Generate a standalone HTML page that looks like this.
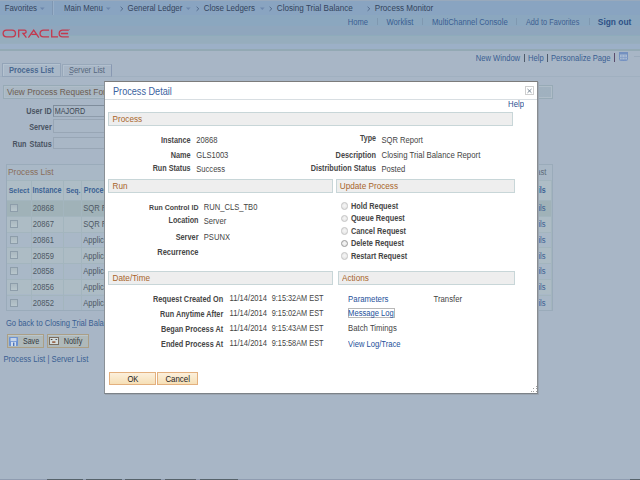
<!DOCTYPE html>
<html><head><meta charset="utf-8">
<style>
*{margin:0;padding:0;box-sizing:border-box}
html,body{width:640px;height:480px;overflow:hidden}
body{position:relative;background:#a8b6c6;font-family:"Liberation Sans",sans-serif;font-size:7.6px;color:#333}
.a{position:absolute}
.t{position:absolute;white-space:nowrap;line-height:10px}
</style></head><body>
<div class="a" style="left:0px;top:0px;width:640px;height:15px;background:#89a4c1"></div>
<div class="a" style="left:0px;top:0px;width:640px;height:1px;background:#98a9bc"></div>
<div class="t" style="left:4.7px;top:4px;font-size:7.85px;color:#34445e;transform:scaleY(1.16);transform-origin:0 4.5px;">Favorites</div>
<div class="t" style="left:64px;top:4px;font-size:7.85px;color:#34445e;transform:scaleY(1.16);transform-origin:0 4.5px;">Main Menu</div>
<div class="t" style="left:127.5px;top:4px;font-size:7.9px;color:#34445e;transform:scaleY(1.16);transform-origin:0 4.5px;">General Ledger</div>
<div class="t" style="left:203.7px;top:4px;font-size:7.95px;color:#34445e;transform:scaleY(1.16);transform-origin:0 4.5px;">Close Ledgers</div>
<div class="t" style="left:276.8px;top:4px;font-size:8.1px;color:#34445e;transform:scaleY(1.16);transform-origin:0 4.5px;">Closing Trial Balance</div>
<div class="t" style="left:374.75px;top:4px;font-size:8.1px;color:#34445e;transform:scaleY(1.16);transform-origin:0 4.5px;">Process Monitor</div>
<svg class="a" style="left:39.8px;top:6.5px" width="5" height="4"><path d="M0 0.4 H4.6 L2.3 3 Z" fill="#6c86ac"/></svg>
<svg class="a" style="left:105.6px;top:6.5px" width="5" height="4"><path d="M0 0.4 H4.6 L2.3 3 Z" fill="#6c86ac"/></svg>
<svg class="a" style="left:186.3px;top:6.5px" width="5" height="4"><path d="M0 0.4 H4.6 L2.3 3 Z" fill="#6c86ac"/></svg>
<svg class="a" style="left:259.8px;top:6.5px" width="5" height="4"><path d="M0 0.4 H4.6 L2.3 3 Z" fill="#6c86ac"/></svg>
<svg class="a" style="left:119.5px;top:6px" width="4" height="6"><path d="M0.6 0.8 L2.8 2.8 L0.6 4.8" fill="none" stroke="#4e6484" stroke-width="0.9"/></svg>
<svg class="a" style="left:196px;top:6px" width="4" height="6"><path d="M0.6 0.8 L2.8 2.8 L0.6 4.8" fill="none" stroke="#4e6484" stroke-width="0.9"/></svg>
<svg class="a" style="left:268.9px;top:6px" width="4" height="6"><path d="M0.6 0.8 L2.8 2.8 L0.6 4.8" fill="none" stroke="#4e6484" stroke-width="0.9"/></svg>
<svg class="a" style="left:366.9px;top:6px" width="4" height="6"><path d="M0.6 0.8 L2.8 2.8 L0.6 4.8" fill="none" stroke="#4e6484" stroke-width="0.9"/></svg>
<div class="a" style="left:52px;top:1px;width:1px;height:14px;background:#7f97b2"></div>
<div class="a" style="left:53px;top:1px;width:1px;height:14px;background:#98afc8"></div>
<div class="a" style="left:0px;top:15px;width:640px;height:11px;background:#8ba7bf"></div>
<div class="a" style="left:0px;top:26px;width:640px;height:9px;background:#8fa6bd"></div>
<div class="a" style="left:0px;top:35px;width:640px;height:1px;background:#8eabbb"></div>
<div class="a" style="left:0px;top:36px;width:640px;height:7px;background:#96adbd"></div>
<div class="a" style="left:0px;top:43px;width:640px;height:1px;background:#98aebe"></div>
<div class="a" style="left:0px;top:44px;width:640px;height:5px;background:#9cb0c7"></div>
<div class="a" style="left:0px;top:49px;width:640px;height:2px;background:#93a9b4"></div>
<div class="a" style="left:0px;top:51px;width:640px;height:429px;background:#a8b6c6"></div>
<svg class="a" style="left:0;top:26px" width="76" height="16" viewBox="0 0 76 16">
<g fill="none" stroke="#c4384e" stroke-width="1.3">
<rect x="3.15" y="4.05" width="12.3" height="6.9" rx="3.45"/>
<path d="M18.7 11.6 V4.05 H24.5 A1.625 1.625 0 0 1 24.5 7.3 H23 L26.4 11.6"/>
<path d="M28.4 11.6 L33.7 4.05 L38.9 11.6 M31.6 8.4 H36.6"/>
<path d="M49.1 4.05 H43.5 A3.45 3.45 0 0 0 43.5 10.95 H49.1"/>
<path d="M51.7 3.4 V10.95 H58"/>
<path d="M68.8 4.05 H62.6 A3.45 3.45 0 0 0 62.6 10.95 H68.8 M60.8 7.5 H68.1"/>
</g>
<circle cx="69.6" cy="3.6" r="0.45" fill="#c4384e"/>
</svg>
<div class="t" style="left:347.8px;top:18px;font-size:7.6px;color:#3a5e92;transform:scaleY(1.16);transform-origin:0 4.5px;">Home</div>
<div class="a" style="left:377px;top:18px;width:1px;height:7px;background:#7f98b0"></div>
<div class="t" style="left:386.6px;top:18px;font-size:7.6px;color:#3a5e92;transform:scaleY(1.16);transform-origin:0 4.5px;">Worklist</div>
<div class="a" style="left:422px;top:18px;width:1px;height:7px;background:#7f98b0"></div>
<div class="t" style="left:431.9px;top:18px;font-size:7.75px;color:#3a5e92;transform:scaleY(1.16);transform-origin:0 4.5px;">MultiChannel Console</div>
<div class="a" style="left:516px;top:18px;width:1px;height:7px;background:#7f98b0"></div>
<div class="t" style="left:525.9px;top:18px;font-size:7.35px;color:#3f6090;transform:scaleY(1.16);transform-origin:0 4.5px;">Add to Favorites</div>
<div class="a" style="left:589px;top:18px;width:1px;height:7px;background:#7f98b0"></div>
<div class="t" style="left:597.8px;top:17px;font-size:8.4px;color:#2f5186;font-weight:bold;transform:scaleY(1.16);transform-origin:0 5.0px;">Sign out</div>
<div class="t" style="left:475.8px;top:54px;font-size:7.6px;color:#3a5e92;transform:scaleY(1.16);transform-origin:0 4.5px;">New Window</div>
<div class="a" style="left:524px;top:54px;width:1px;height:8px;background:#4e5a6a"></div>
<div class="t" style="left:528px;top:54px;font-size:7.6px;color:#3a5e92;transform:scaleY(1.16);transform-origin:0 4.5px;">Help</div>
<div class="a" style="left:547px;top:54px;width:1px;height:8px;background:#4e5a6a"></div>
<div class="t" style="left:551px;top:54px;font-size:7.6px;color:#3a5e92;transform:scaleY(1.16);transform-origin:0 4.5px;">Personalize Page</div>
<div class="a" style="left:614px;top:53px;width:1px;height:9px;background:#5a4c6c"></div>
<svg class="a" style="left:619px;top:52px" width="9" height="9"><rect x="0.5" y="0.5" width="8" height="8" rx="1" fill="#a9bbd3" stroke="#7390c0"/><rect x="0" y="0" width="9" height="2.5" fill="#7390c0"/><path d="M3 3 V9 M0 5.5 H9 M0 7.5 H9 M6 3 V9" stroke="#7f9bc6" stroke-width="0.7"/></svg>
<div class="a" style="left:634px;top:56px;width:6px;height:1px;background:#9aaabb"></div>
<div class="a" style="left:0px;top:76px;width:640px;height:1px;background:#a0b0c0"></div>
<div class="a" style="left:2px;top:63px;width:59px;height:14px;background:#a9b8c8;border:1px solid #93a4b8;box-shadow:inset 1px 1px 0 #b4c2d0"></div>
<div class="t" style="left:9px;top:66px;font-size:7.55px;color:#4a6890;font-weight:bold;transform:scaleY(1.16);transform-origin:0 4.5px;">Process List</div>
<div class="a" style="left:62px;top:64px;width:50px;height:13px;background:#a8b6c6;border:1px solid #98a8ba;border-right-color:#8898b2;box-shadow:inset 1px 1px 0 #b2c0ce"></div>
<div class="t" style="left:68.9px;top:66px;font-size:7.55px;color:#56667c;transform:scaleY(1.16);transform-origin:0 4.5px;">Server List</div>
<div class="a" style="left:69px;top:74px;width:4px;height:1px;background:#7888a0"></div>
<div class="a" style="left:3px;top:85px;width:550px;height:14px;background:linear-gradient(90deg,#aab8c4,#a0b1bf);border:1px solid #97aab6;box-shadow:inset 0 0 0 1px #afbdc8"></div>
<div class="t" style="left:6.9px;top:87px;font-size:8.4px;color:#6e5e52;transform:scaleY(1.0);transform-origin:0 5.0px;">View Process Request For</div>
<div class="t" style="right:588.3px;top:107px;font-size:7.25px;color:#4a5462;font-weight:bold;transform:scaleY(1.16);transform-origin:0 4.5px;">User ID</div>
<div class="a" style="left:53px;top:105px;width:60px;height:12px;background:#a9b7c6;border:1px solid #8e9cab;border-top-color:#7f8d9c;border-left-color:#7f8d9c"></div>
<div class="t" style="left:54.8px;top:107px;font-size:7.2px;color:#3e4854;transform:scaleY(1.16);transform-origin:0 4.5px;">MAJORD</div>
<div class="t" style="right:588.3px;top:123px;font-size:7.25px;color:#4a5462;font-weight:bold;transform:scaleY(1.16);transform-origin:0 4.5px;">Server</div>
<div class="a" style="left:53px;top:119px;width:60px;height:14px;background:#a9b7c6;border:1px solid #98a6b5"></div>
<div class="t" style="right:588.3px;top:140px;font-size:7.25px;color:#4a5462;font-weight:bold;transform:scaleY(1.16);transform-origin:0 4.5px;word-spacing:1px">Run Status</div>
<div class="a" style="left:53px;top:137px;width:60px;height:12px;background:#a9b7c6;border:1px solid #98a6b5"></div>
<div class="a" style="left:6px;top:164px;width:547px;height:147px;background:#a9b8c6;border:1px solid #9aabba"></div>
<div class="t" style="left:8px;top:167px;font-size:8.4px;color:#8a6e5c;transform:scaleY(1.16);transform-origin:0 5.0px;">Process List</div>
<div class="t" style="right:93.70000000000005px;top:168px;font-size:7.6px;color:#5e6c7a;transform:scaleY(1.16);transform-origin:0 4.5px;">Last</div>
<div class="a" style="left:7px;top:180px;width:545px;height:20px;background:#aebdc6"></div>
<div class="a" style="left:7px;top:200px;width:545px;height:16px;background:#a0b2b8"></div>
<div class="a" style="left:7px;top:216px;width:545px;height:16px;background:#adbcc5"></div>
<div class="a" style="left:7px;top:232px;width:545px;height:15px;background:#a9b8c7"></div>
<div class="a" style="left:7px;top:247px;width:545px;height:16px;background:#adbcc5"></div>
<div class="a" style="left:7px;top:263px;width:545px;height:16px;background:#a9b8c7"></div>
<div class="a" style="left:7px;top:279px;width:545px;height:15px;background:#adbcc5"></div>
<div class="a" style="left:7px;top:294px;width:545px;height:16px;background:#a9b8c7"></div>
<div class="a" style="left:7px;top:180px;width:545px;height:1px;background:#a3b5be"></div>
<div class="a" style="left:7px;top:200px;width:545px;height:1px;background:#a3b5be"></div>
<div class="a" style="left:7px;top:216px;width:545px;height:1px;background:#a3b5be"></div>
<div class="a" style="left:7px;top:232px;width:545px;height:1px;background:#a3b5be"></div>
<div class="a" style="left:7px;top:247px;width:545px;height:1px;background:#a3b5be"></div>
<div class="a" style="left:7px;top:263px;width:545px;height:1px;background:#a3b5be"></div>
<div class="a" style="left:7px;top:279px;width:545px;height:1px;background:#a3b5be"></div>
<div class="a" style="left:7px;top:295px;width:545px;height:1px;background:#a3b5be"></div>
<div class="a" style="left:31px;top:180px;width:1px;height:130px;background:#a3b5be"></div>
<div class="a" style="left:63px;top:180px;width:1px;height:130px;background:#a3b5be"></div>
<div class="a" style="left:81px;top:180px;width:1px;height:130px;background:#a3b5be"></div>
<div class="a" style="left:551px;top:180px;width:1px;height:130px;background:#a3b5be"></div>
<div class="t" style="left:8.7px;top:186px;font-size:7.0px;color:#3c6294;font-weight:bold;transform:scaleY(1.16);transform-origin:0 4.5px;">Select</div>
<div class="t" style="left:32.5px;top:186px;font-size:7.15px;color:#3c6294;font-weight:bold;transform:scaleY(1.16);transform-origin:0 4.5px;">Instance</div>
<div class="t" style="left:65.9px;top:186px;font-size:6.9px;color:#3c6294;font-weight:bold;transform:scaleY(1.16);transform-origin:0 4.5px;">Seq.</div>
<div class="t" style="left:83.7px;top:186px;font-size:7.1px;color:#3c6294;font-weight:bold;transform:scaleY(1.16);transform-origin:0 4.5px;">Process Type</div>
<div class="t" style="right:94.39999999999998px;top:186px;font-size:7.1px;color:#3c6294;font-weight:bold;transform:scaleY(1.16);transform-origin:0 4.5px;">Details</div>
<div class="a" style="left:10px;top:204px;width:8px;height:8px;border:1px solid #8d9daa;background:linear-gradient(#aab8c0,#b8c6cc)"></div>
<div class="t" style="left:32.75px;top:204px;font-size:7.6px;color:#4e5864;transform:scaleY(1.16);transform-origin:0 4.5px;">20868</div>
<div class="t" style="left:83.2px;top:204px;font-size:7.6px;color:#4e5864;transform:scaleY(1.16);transform-origin:0 4.5px;">SQR Report</div>
<div class="t" style="right:94.39999999999998px;top:204px;font-size:7.6px;color:#3c6294;transform:scaleY(1.16);transform-origin:0 4.5px;">Details</div>
<div class="a" style="left:10px;top:220px;width:8px;height:8px;border:1px solid #8d9daa;background:linear-gradient(#aab8c0,#b8c6cc)"></div>
<div class="t" style="left:32.75px;top:220px;font-size:7.6px;color:#4e5864;transform:scaleY(1.16);transform-origin:0 4.5px;">20867</div>
<div class="t" style="left:83.2px;top:220px;font-size:7.6px;color:#4e5864;transform:scaleY(1.16);transform-origin:0 4.5px;">SQR Report</div>
<div class="t" style="right:94.39999999999998px;top:220px;font-size:7.6px;color:#3c6294;transform:scaleY(1.16);transform-origin:0 4.5px;">Details</div>
<div class="a" style="left:10px;top:236px;width:8px;height:8px;border:1px solid #8d9daa;background:linear-gradient(#aab8c0,#b8c6cc)"></div>
<div class="t" style="left:32.75px;top:236px;font-size:7.6px;color:#4e5864;transform:scaleY(1.16);transform-origin:0 4.5px;">20861</div>
<div class="t" style="left:83.2px;top:236px;font-size:7.6px;color:#4e5864;transform:scaleY(1.16);transform-origin:0 4.5px;">Application Engine</div>
<div class="t" style="right:94.39999999999998px;top:236px;font-size:7.6px;color:#3c6294;transform:scaleY(1.16);transform-origin:0 4.5px;">Details</div>
<div class="a" style="left:10px;top:251px;width:8px;height:8px;border:1px solid #8d9daa;background:linear-gradient(#aab8c0,#b8c6cc)"></div>
<div class="t" style="left:32.75px;top:252px;font-size:7.6px;color:#4e5864;transform:scaleY(1.16);transform-origin:0 4.5px;">20859</div>
<div class="t" style="left:83.2px;top:252px;font-size:7.6px;color:#4e5864;transform:scaleY(1.16);transform-origin:0 4.5px;">Application Engine</div>
<div class="t" style="right:94.39999999999998px;top:252px;font-size:7.6px;color:#3c6294;transform:scaleY(1.16);transform-origin:0 4.5px;">Details</div>
<div class="a" style="left:10px;top:267px;width:8px;height:8px;border:1px solid #8d9daa;background:linear-gradient(#aab8c0,#b8c6cc)"></div>
<div class="t" style="left:32.75px;top:267px;font-size:7.6px;color:#4e5864;transform:scaleY(1.16);transform-origin:0 4.5px;">20858</div>
<div class="t" style="left:83.2px;top:267px;font-size:7.6px;color:#4e5864;transform:scaleY(1.16);transform-origin:0 4.5px;">Application Engine</div>
<div class="t" style="right:94.39999999999998px;top:267px;font-size:7.6px;color:#3c6294;transform:scaleY(1.16);transform-origin:0 4.5px;">Details</div>
<div class="a" style="left:10px;top:283px;width:8px;height:8px;border:1px solid #8d9daa;background:linear-gradient(#aab8c0,#b8c6cc)"></div>
<div class="t" style="left:32.75px;top:283px;font-size:7.6px;color:#4e5864;transform:scaleY(1.16);transform-origin:0 4.5px;">20856</div>
<div class="t" style="left:83.2px;top:283px;font-size:7.6px;color:#4e5864;transform:scaleY(1.16);transform-origin:0 4.5px;">Application Engine</div>
<div class="t" style="right:94.39999999999998px;top:283px;font-size:7.6px;color:#3c6294;transform:scaleY(1.16);transform-origin:0 4.5px;">Details</div>
<div class="a" style="left:10px;top:299px;width:8px;height:8px;border:1px solid #8d9daa;background:linear-gradient(#aab8c0,#b8c6cc)"></div>
<div class="t" style="left:32.75px;top:299px;font-size:7.6px;color:#4e5864;transform:scaleY(1.16);transform-origin:0 4.5px;">20852</div>
<div class="t" style="left:83.2px;top:299px;font-size:7.6px;color:#4e5864;transform:scaleY(1.16);transform-origin:0 4.5px;">Application Engine</div>
<div class="t" style="right:94.39999999999998px;top:299px;font-size:7.6px;color:#3c6294;transform:scaleY(1.16);transform-origin:0 4.5px;">Details</div>
<div class="t" style="left:5.9px;top:319px;font-size:7.6px;color:#3a5e92;transform:scaleY(1.16);transform-origin:0 4.5px;">Go back to Closing Trial Balance</div>
<div class="a" style="left:72px;top:327px;width:5px;height:1px;background:#6a86aa"></div>
<div class="a" style="left:7px;top:334px;width:37px;height:14px;background:#afb9ba;border:1px solid #ab9f86;box-shadow:inset 0 1px 0 #bac6cc"></div>
<svg class="a" style="left:9px;top:337px" width="9" height="9"><rect x="0" y="0" width="9" height="9" rx="0.8" fill="#6c92d2"/><rect x="1.5" y="1" width="6" height="3.2" fill="#c6d4e8"/><rect x="2" y="5" width="5" height="4" fill="#d0dcec"/><rect x="4" y="5.5" width="1.4" height="3.5" fill="#4a72b8"/></svg>
<div class="t" style="left:22.9px;top:337px;font-size:7.15px;color:#333a44;transform:scaleY(1.16);transform-origin:0 4.5px;">Save</div>
<div class="a" style="left:47px;top:334px;width:42px;height:14px;background:#afb9ba;border:1px solid #ab9f86;box-shadow:inset 0 1px 0 #bac6cc"></div>
<svg class="a" style="left:49px;top:337px" width="10" height="8"><rect x="0.5" y="0.5" width="9" height="7" fill="#d4dcdc" stroke="#7a6c5e"/><rect x="1.8" y="2" width="1.6" height="1" fill="#4a4038"/><rect x="6.5" y="2" width="1.6" height="1" fill="#4a5868"/><rect x="3.2" y="4.2" width="3.2" height="1.8" fill="#9a6a50"/></svg>
<div class="t" style="left:63.8px;top:337px;font-size:7.25px;color:#333a44;transform:scaleY(1.16);transform-origin:0 4.5px;">Notify</div>
<div class="t" style="left:3.4px;top:355px;font-size:7.7px;color:#3a5e92;transform:scaleY(1.16);transform-origin:0 4.5px;">Process List | Server List</div>
<div class="a" style="left:104px;top:81px;width:434px;height:313px;background:#fff;border:1px solid #8a9096;border-top-color:#7c7c7c;border-right-color:#888c90;border-bottom-color:#7c8288"></div>
<div class="a" style="left:538px;top:82px;width:1px;height:312px;background:#9ca6b2"></div>
<div class="a" style="left:105px;top:394px;width:434px;height:1px;background:#9ca6b2"></div>
<div class="t" style="left:113px;top:87px;font-size:9.15px;color:#3a62a0;transform:scaleY(1.16);transform-origin:0 5.0px;">Process Detail</div>
<div class="a" style="left:525px;top:86px;width:9px;height:9px;border:1px solid #cfcfcf;background:#fff"></div>
<svg class="a" style="left:525px;top:86px" width="9" height="9"><path d="M2.5 3 L6.5 6.8 M6.5 3 L2.5 6.8" stroke="#657585" stroke-width="0.85"/></svg>
<div class="a" style="left:105px;top:99px;width:432px;height:1px;background:#d8dee2"></div>
<div class="t" style="right:116px;top:100px;font-size:7.75px;color:#2a5090;transform:scaleY(1.16);transform-origin:0 4.5px;">Help</div>
<div class="a" style="left:108px;top:112px;width:405px;height:14px;background:#eeeeee;border:1px solid #c8d6d8"></div>
<div class="t" style="left:112.6px;top:115px;font-size:8.2px;color:#a8642a;transform:scaleY(1.16);transform-origin:0 4.0px;">Process</div>
<div class="a" style="left:108px;top:179px;width:225px;height:14px;background:#eeeeee;border:1px solid #c8d6d8"></div>
<div class="t" style="left:112.6px;top:182px;font-size:8.2px;color:#a8642a;transform:scaleY(1.16);transform-origin:0 4.0px;">Run</div>
<div class="a" style="left:336px;top:179px;width:179px;height:14px;background:#eeeeee;border:1px solid #c8d6d8"></div>
<div class="t" style="left:339.8px;top:182px;font-size:8.2px;color:#a8642a;transform:scaleY(1.16);transform-origin:0 4.0px;">Update Process</div>
<div class="a" style="left:108px;top:271px;width:225px;height:14px;background:#eeeeee;border:1px solid #c8d6d8"></div>
<div class="t" style="left:112.6px;top:274px;font-size:8.2px;color:#a8642a;transform:scaleY(1.16);transform-origin:0 4.0px;">Date/Time</div>
<div class="a" style="left:338px;top:271px;width:177px;height:14px;background:#eeeeee;border:1px solid #c8d6d8"></div>
<div class="t" style="left:342px;top:274px;font-size:8.2px;color:#a8642a;transform:scaleY(1.16);transform-origin:0 4.0px;">Actions</div>
<div class="t" style="right:449.4px;top:136px;font-size:7.3px;color:#464646;font-weight:bold;transform:scaleY(1.16);transform-origin:0 4.5px;">Instance</div>
<div class="t" style="left:196.25px;top:136px;font-size:7.6px;color:#444444;transform:scaleY(1.16);transform-origin:0 4.5px;">20868</div>
<div class="t" style="right:449.4px;top:151px;font-size:7.3px;color:#464646;font-weight:bold;transform:scaleY(1.16);transform-origin:0 4.5px;">Name</div>
<div class="t" style="left:196.25px;top:151px;font-size:7.6px;color:#444444;transform:scaleY(1.16);transform-origin:0 4.5px;">GLS1003</div>
<div class="t" style="right:449.4px;top:164px;font-size:7.2px;color:#464646;font-weight:bold;transform:scaleY(1.16);transform-origin:0 4.5px;">Run Status</div>
<div class="t" style="left:196.25px;top:165px;font-size:7.6px;color:#444444;transform:scaleY(1.16);transform-origin:0 4.5px;">Success</div>
<div class="t" style="right:264px;top:134px;font-size:7.1px;color:#464646;font-weight:bold;transform:scaleY(1.16);transform-origin:0 4.5px;">Type</div>
<div class="t" style="left:381.5px;top:136px;font-size:7.6px;color:#444444;transform:scaleY(1.16);transform-origin:0 4.5px;">SQR Report</div>
<div class="t" style="right:264px;top:151px;font-size:7.35px;color:#464646;font-weight:bold;transform:scaleY(1.16);transform-origin:0 4.5px;">Description</div>
<div class="t" style="left:381.5px;top:151px;font-size:7.8px;color:#444444;transform:scaleY(1.16);transform-origin:0 4.5px;">Closing Trial Balance Report</div>
<div class="t" style="right:264px;top:164px;font-size:7.3px;color:#464646;font-weight:bold;transform:scaleY(1.16);transform-origin:0 4.5px;">Distribution Status</div>
<div class="t" style="left:381.5px;top:165px;font-size:7.6px;color:#444444;transform:scaleY(1.16);transform-origin:0 4.5px;">Posted</div>
<div class="t" style="right:441.5px;top:203px;font-size:7.0px;color:#464646;font-weight:bold;transform:scaleY(1.16);transform-origin:0 4.5px;">Run Control ID</div>
<div class="t" style="left:203.8px;top:203px;font-size:7.6px;color:#444444;transform:scaleY(1.16);transform-origin:0 4.5px;">RUN_CLS_TB0</div>
<div class="t" style="right:441.5px;top:216px;font-size:7.2px;color:#464646;font-weight:bold;transform:scaleY(1.16);transform-origin:0 4.5px;">Location</div>
<div class="t" style="left:203.8px;top:217px;font-size:7.6px;color:#444444;transform:scaleY(1.16);transform-origin:0 4.5px;">Server</div>
<div class="t" style="right:441.5px;top:233px;font-size:7.35px;color:#464646;font-weight:bold;transform:scaleY(1.16);transform-origin:0 4.5px;">Server</div>
<div class="t" style="left:203.8px;top:233px;font-size:7.6px;color:#444444;transform:scaleY(1.16);transform-origin:0 4.5px;">PSUNX</div>
<div class="t" style="right:441.5px;top:248px;font-size:7.5px;color:#464646;font-weight:bold;transform:scaleY(1.16);transform-origin:0 4.5px;">Recurrence</div>
<div class="a" style="left:340.5px;top:202.1px;width:7.8px;height:7.8px;border-radius:50%;border:1px solid #c4c4c4;background:radial-gradient(circle at 50% 45%,#f6f6f6,#e0e0e0)"></div>
<div class="t" style="left:350.9px;top:202px;font-size:7.35px;color:#464646;font-weight:bold;transform:scaleY(1.16);transform-origin:0 4.5px;">Hold Request</div>
<div class="a" style="left:340.5px;top:214.5px;width:7.8px;height:7.8px;border-radius:50%;border:1px solid #c4c4c4;background:radial-gradient(circle at 50% 45%,#f6f6f6,#e0e0e0)"></div>
<div class="t" style="left:350.9px;top:214px;font-size:7.35px;color:#464646;font-weight:bold;transform:scaleY(1.16);transform-origin:0 4.5px;">Queue Request</div>
<div class="a" style="left:340.5px;top:226.9px;width:7.8px;height:7.8px;border-radius:50%;border:1px solid #c4c4c4;background:radial-gradient(circle at 50% 45%,#f6f6f6,#e0e0e0)"></div>
<div class="t" style="left:350.9px;top:227px;font-size:7.35px;color:#464646;font-weight:bold;transform:scaleY(1.16);transform-origin:0 4.5px;">Cancel Request</div>
<div class="a" style="left:340.5px;top:239.6px;width:7.8px;height:7.8px;border-radius:50%;border:1px solid #9a9a9a;background:radial-gradient(circle at 50% 45%,#f6f6f6,#e0e0e0)"></div>
<div class="t" style="left:350.9px;top:239px;font-size:7.35px;color:#464646;font-weight:bold;transform:scaleY(1.16);transform-origin:0 4.5px;">Delete Request</div>
<div class="a" style="left:340.5px;top:251.9px;width:7.8px;height:7.8px;border-radius:50%;border:1px solid #c4c4c4;background:radial-gradient(circle at 50% 45%,#f6f6f6,#e0e0e0)"></div>
<div class="t" style="left:350.9px;top:252px;font-size:7.35px;color:#464646;font-weight:bold;transform:scaleY(1.16);transform-origin:0 4.5px;">Restart Request</div>
<div class="t" style="right:416.8px;top:295px;font-size:7.3px;color:#464646;font-weight:bold;transform:scaleY(1.16);transform-origin:0 4.5px;">Request Created On</div>
<div class="t" style="right:416.8px;top:310px;font-size:7.25px;color:#464646;font-weight:bold;transform:scaleY(1.16);transform-origin:0 4.5px;">Run Anytime After</div>
<div class="t" style="right:416.8px;top:325px;font-size:7.3px;color:#464646;font-weight:bold;transform:scaleY(1.16);transform-origin:0 4.5px;">Began Process At</div>
<div class="t" style="right:416.8px;top:340px;font-size:7.3px;color:#464646;font-weight:bold;transform:scaleY(1.16);transform-origin:0 4.5px;">Ended Process At</div>
<div class="t" style="left:229.6px;top:294px;font-size:7.6px;color:#444444;transform:scaleY(1.16);transform-origin:0 4.5px;">11/14/2014</div>
<div class="t" style="left:271.7px;top:294px;font-size:7.35px;color:#444444;transform:scaleY(1.16);transform-origin:0 4.5px;">9:15:32AM EST</div>
<div class="t" style="left:229.6px;top:309px;font-size:7.6px;color:#444444;transform:scaleY(1.16);transform-origin:0 4.5px;">11/14/2014</div>
<div class="t" style="left:271.7px;top:309px;font-size:7.35px;color:#444444;transform:scaleY(1.16);transform-origin:0 4.5px;">9:15:02AM EST</div>
<div class="t" style="left:229.6px;top:324px;font-size:7.6px;color:#444444;transform:scaleY(1.16);transform-origin:0 4.5px;">11/14/2014</div>
<div class="t" style="left:271.7px;top:324px;font-size:7.35px;color:#444444;transform:scaleY(1.16);transform-origin:0 4.5px;">9:15:43AM EST</div>
<div class="t" style="left:229.6px;top:339px;font-size:7.6px;color:#444444;transform:scaleY(1.16);transform-origin:0 4.5px;">11/14/2014</div>
<div class="t" style="left:271.7px;top:339px;font-size:7.35px;color:#444444;transform:scaleY(1.16);transform-origin:0 4.5px;">9:15:58AM EST</div>
<div class="t" style="left:348.1px;top:295px;font-size:7.8px;color:#24509a;transform:scaleY(1.16);transform-origin:0 4.5px;">Parameters</div>
<div class="t" style="left:433.5px;top:295px;font-size:7.75px;color:#444444;transform:scaleY(1.16);transform-origin:0 4.5px;">Transfer</div>
<svg class="a" style="left:348px;top:308px" width="48" height="10"><rect x="0.5" y="0.5" width="46" height="9" fill="none" stroke="#707070" stroke-width="1" stroke-dasharray="1 1"/></svg>
<div class="t" style="left:348.1px;top:309px;font-size:7.6px;color:#24509a;transform:scaleY(1.16);transform-origin:0 4.5px;">Message Log</div>
<div class="t" style="left:348.1px;top:324px;font-size:7.75px;color:#444444;transform:scaleY(1.16);transform-origin:0 4.5px;">Batch Timings</div>
<div class="t" style="left:348.1px;top:340px;font-size:7.6px;color:#24509a;transform:scaleY(1.16);transform-origin:0 4.5px;">View Log/Trace</div>
<div class="a" style="left:109px;top:372px;width:47px;height:13px;background:linear-gradient(#fcf0dc,#f6dfb6);border:1px solid #e3b07e"></div>
<div class="t" style="left:127.4px;top:375px;font-size:7.6px;color:#222;transform:scaleY(1.16);transform-origin:0 4.5px;">OK</div>
<div class="a" style="left:157px;top:372px;width:41px;height:13px;background:linear-gradient(#fcf0dc,#f6dfb6);border:1px solid #e3b07e"></div>
<div class="t" style="left:165.4px;top:375px;font-size:7.9px;color:#222;transform:scaleY(1.16);transform-origin:0 4.5px;">Cancel</div>
<svg class="a" style="left:528px;top:384px" width="9" height="9"><g fill="#a0a0a0"><rect x="8" y="2" width="1" height="1"/><rect x="5" y="4" width="1" height="1"/><rect x="8" y="4" width="1" height="1"/><rect x="3" y="7" width="1" height="1"/><rect x="5" y="7" width="1" height="1"/><rect x="8" y="7" width="1" height="1"/></g></svg>
<div class="a" style="left:0px;top:479px;width:640px;height:1px;background:#8f9cb0"></div>
<div class="a" style="left:47px;top:479px;width:36px;height:1px;background:#56626a"></div>
<div class="a" style="left:86px;top:479px;width:36px;height:1px;background:#56626a"></div>
<div class="a" style="left:125px;top:479px;width:36px;height:1px;background:#56626a"></div>
<div class="a" style="left:165px;top:479px;width:31px;height:1px;background:#56626a"></div>
<div class="a" style="left:200px;top:479px;width:38px;height:1px;background:#56626a"></div>
<div class="a" style="left:630px;top:479px;width:10px;height:1px;background:#56626a"></div>
</body></html>
